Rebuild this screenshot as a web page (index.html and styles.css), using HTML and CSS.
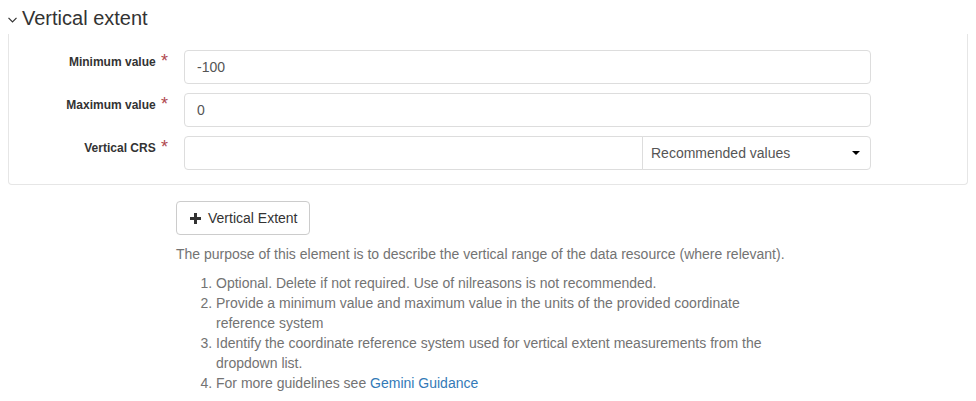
FILE: index.html
```html
<!DOCTYPE html>
<html>
<head>
<meta charset="utf-8">
<link rel="stylesheet" href="styles.css">
</head>
<body>
<div class="section">
  <h2 class="section-title">
    <svg class="chevron" width="9" height="6" viewBox="0 0 9 6"><polyline points="0.5,0.8 4.5,4.8 8.5,0.8" fill="none" stroke="#333" stroke-width="1.2"/></svg>
    <span>Vertical extent</span>
  </h2>
  <div class="panel">
    <div class="form-row">
      <label class="control-label">Minimum value <span class="req">*</span></label>
      <div class="control"><input class="form-control" type="text" value="-100"></div>
    </div>
    <div class="form-row">
      <label class="control-label">Maximum value <span class="req">*</span></label>
      <div class="control"><input class="form-control" type="text" value="0"></div>
    </div>
    <div class="form-row">
      <label class="control-label">Vertical CRS <span class="req">*</span></label>
      <div class="control input-group">
        <input class="form-control crs-input" type="text" value="">
        <div class="select-box"><span>Recommended values</span><span class="caret"></span></div>
      </div>
    </div>
  </div>
  <div class="below">
    <button class="btn" type="button">
      <svg class="plus" width="11" height="11" viewBox="0 0 11 11"><rect x="4" y="0" width="3" height="11" fill="#333"/><rect x="0" y="4" width="11" height="3" fill="#333"/></svg>
      <span>Vertical Extent</span>
    </button>
    <div class="help">
      <p>The purpose of this element is to describe the vertical range of the data resource (where relevant).</p>
      <ol>
        <li>Optional. Delete if not required. Use of nilreasons is not recommended.</li>
        <li>Provide a minimum value and maximum value in the units of the provided coordinate reference system</li>
        <li>Identify the coordinate reference system used for vertical extent measurements from the dropdown list.</li>
        <li>For more guidelines see <a href="#">Gemini Guidance</a></li>
      </ol>
    </div>
  </div>
</div>
</body>
</html>
```

FILE: styles.css
```css
* { box-sizing: border-box; }
body {
  margin: 0 8px;
  font-family: "Liberation Sans", Arial, sans-serif;
  font-size: 14px;
  color: #333;
  background: #fff;
}
.section-title {
  margin: 0;
  height: 34px;
  display: flex;
  align-items: center;
  font-size: 20px;
  font-weight: normal;
  color: #333;
  padding-top: 2px;
}
.chevron { margin: 3px 5px 0 0; }
.panel {
  border: 1px solid #e6e6e6;
  border-top: none;
  border-radius: 0 0 4px 4px;
  padding: 16px 0 14px;
  display: flex;
  flex-direction: column;
  gap: 9px;
}
.form-row {
  display: grid;
  grid-template-columns: 175px 687px;
}
.control-label {
  font-size: 12px;
  font-weight: bold;
  text-align: right;
  padding: 5px 16px 0 0;
  color: #333;
}
.req {
  color: #b0484f;
  font-size: 18px;
  font-weight: normal;
  margin-left: 2px;
  vertical-align: top;
  position: relative;
  top: -4px;
}
.form-control {
  display: block;
  width: 100%;
  height: 34px;
  padding: 6px 12px;
  font-family: inherit;
  font-size: 14px;
  color: #555;
  border: 1px solid #ddd;
  border-radius: 4px;
  background: #fff;
  outline: none;
}
.input-group { display: flex; }
.crs-input {
  width: 459px;
  border-radius: 4px 0 0 4px;
  flex: none;
}
.select-box {
  flex: 1;
  height: 34px;
  border: 1px solid #ddd;
  margin-left: -1px;
  border-radius: 0 4px 4px 0;
  display: flex;
  align-items: center;
  justify-content: space-between;
  padding: 0 10px 0 8px;
  color: #555;
  font-size: 14px;
}
.caret {
  width: 0;
  height: 0;
  border-left: 4px solid transparent;
  border-right: 4px solid transparent;
  border-top: 4px solid #000;
}
.below { padding-left: 168px; }
.btn {
  margin-top: 16px;
  display: inline-flex;
  align-items: center;
  gap: 7px;
  height: 34px;
  padding: 0 11px 0 13px;
  border: 1px solid #ccc;
  border-radius: 4px;
  background: #fff;
  font-family: inherit;
  font-size: 14px;
  color: #333;
}
.help {
  color: #737373;
  font-size: 14px;
  line-height: 20px;
}
.help p { margin: 9px 0 9px; }
.help ol { margin: 0; padding-left: 40px; width: 600px; }
.help a { color: #337ab7; text-decoration: none; }
```
